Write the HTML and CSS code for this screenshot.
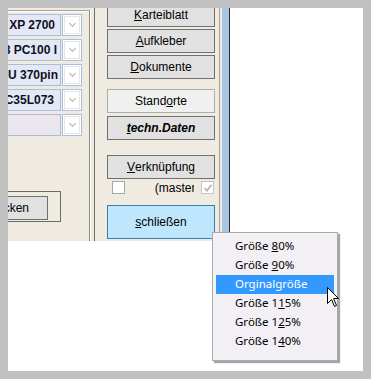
FILE: index.html
```html
<!DOCTYPE html>
<html lang="de">
<head>
    <meta charset="UTF-8">
    <title>Größe</title>
    <link rel="stylesheet" href="styles.css">
</head>
<body>
    <div class="screen">
        <div class="window">
            <div class="client">
                <div class="group">
                    <div class="field-row">
                        <div class="field"><span class="val v1">XP 2700</span></div>
                        <div class="drop"><span class="arrow"></span></div>
                    </div>
                    <div class="field-row">
                        <div class="field"><span class="val v2">SDRAM 128 PC100 I</span></div>
                        <div class="drop"><span class="arrow"></span></div>
                    </div>
                    <div class="field-row">
                        <div class="field"><span class="val v3">CPU 370pin</span></div>
                        <div class="drop"><span class="arrow"></span></div>
                    </div>
                    <div class="field-row">
                        <div class="field"><span class="val v4">IC35L073</span></div>
                        <div class="drop"><span class="arrow"></span></div>
                    </div>
                    <div class="field-row">
                        <div class="field empty"></div>
                        <div class="drop"><span class="arrow"></span></div>
                    </div>
                    <div class="print-box">
                        <div class="btn print-btn">Drucken</div>
                    </div>
                </div>

                <div class="panel">
                    <div class="btn first"><u>K</u>arteiblatt</div>
                    <div class="btn"><u>A</u>ufkleber</div>
                    <div class="btn"><u>D</u>okumente</div>
                    <div class="btn flat gap-lg">Stand<u>o</u>rte</div>
                    <div class="btn bold"><u>t</u>echn.Daten</div>
                    <div class="btn gap-xl"><u>V</u>erknüpfung</div>
                    <div class="check-row">
                        <span class="check"></span>
                        <span class="master">(master)</span>
                        <span class="check checked">
                            <svg width="10" height="10" viewBox="0 0 10 10"><path d="M1.5 5.2 L4 7.6 L8.6 1.8" fill="none" stroke="#b4b4b4" stroke-width="1.8"/></svg>
                        </span>
                    </div>
                    <div class="btn close"><u>s</u>chließen</div>
                </div>
            </div>
        </div>

        <div class="menu">
            <div class="item">Größe <u>8</u>0%</div>
            <div class="item">Größe <u>9</u>0%</div>
            <div class="item active">Orginal<u>g</u>röße</div>
            <div class="item">Größe 1<u>1</u>5%</div>
            <div class="item">Größe 1<u>2</u>5%</div>
            <div class="item">Größe 1<u>4</u>0%</div>
        </div>

        <svg class="cursor" width="13" height="21" viewBox="0 0 13 21">
            <path d="M0.5 0.5 L0.5 16.5 L4.5 12.5 L7.5 19.5 L9.5 18.5 L6.6 11.5 L11.5 11.5 Z" fill="#fff" stroke="#000" stroke-width="1"/>
        </svg>
    </div>
</body>
</html>
```

FILE: styles.css
```css
* {
    margin: 0;
    padding: 0;
    box-sizing: border-box;
}
body {
    background: #c0c0c0;
    padding: 8px;
    font-family: 'Liberation Sans', Arial, sans-serif;
}
.screen {
    position: relative;
    width: 355px;
    height: 363px;
    background: #fff;
    overflow: hidden;
}
.window {
    width: 222px;
    height: 233px;
    background: #a7c5e2;
    border-right: 1px solid #2e2e2e;
    padding-right: 7px;
}
.client {
    height: 100%;
    background: #efebe1;
    display: flex;
}
.group {
    width: 82px;
    margin-top: 2px;
    border-top: 1px solid #a0a0a0;
    border-right: 1px solid #8c8c8c;
    box-shadow: inset 0 1px 0 #fff, 1px 0 0 #fff;
    padding-top: 3px;
    margin-right: 4px;
}
.field-row {
    display: flex;
    gap: 1px;
    height: 22px;
    margin-bottom: 3px;
}
.field {
    width: 53px;
    height: 22px;
    background: #e3e8f4;
    border: 1px solid #a8bedb;
    border-left: none;
    display: flex;
    justify-content: flex-end;
    align-items: center;
    overflow: hidden;
    white-space: nowrap;
    font-size: 12px;
    font-weight: bold;
    color: #10101e;
}
.field.empty {
    background: #ebe6ed;
}
.v1 { margin-right: 5px; }
.v2 { margin-right: 3px; }
.v3 { margin-right: 2px; }
.v4 { margin-right: 6px; }
.drop {
    width: 20px;
    height: 22px;
    background: #fff;
    border: 1px solid #a8bedb;
    box-shadow: inset 0 0 0 1px #fff, inset 0 0 0 2px #e6e6e6;
    display: flex;
    align-items: center;
    justify-content: center;
}
.arrow {
    width: 5px;
    height: 5px;
    border-right: 1px solid #b0b0b0;
    border-bottom: 1px solid #b0b0b0;
    transform: rotate(45deg);
    margin-top: -3px;
}
.print-box {
    width: 53px;
    height: 31px;
    margin-top: 55px;
    border: 1px solid #6b6b6b;
    border-left: none;
    padding: 2px 12px 3px 0;
}
.print-box .btn {
    height: 24px;
    border-left: none;
    display: flex;
    justify-content: flex-end;
    padding-right: 18px;
    overflow: hidden;
}
.panel {
    width: 126px;
    height: 100%;
    border-left: 1px solid #6f6f6f;
    border-right: 1px solid #a0a0a0;
    padding: 0 4px 0 12px;
}
.btn {
    height: 24px;
    margin-top: 2px;
    background: #e1e1e1;
    border: 1px solid #707070;
    font-size: 12px;
    color: #000;
    display: flex;
    align-items: center;
    justify-content: center;
    white-space: nowrap;
}
.btn.first {
    margin-top: -5px;
}
.btn.flat {
    background: #f0f0f0;
    border-color: #adadad;
}
.btn.bold {
    font-weight: bold;
    font-style: italic;
    margin-top: 3px;
}
.gap-lg {
    margin-top: 10px;
}
.gap-xl {
    margin-top: 15px;
}
.check-row {
    display: flex;
    align-items: center;
    height: 13px;
    margin-top: 2px;
    padding: 0 1px 0 5px;
}
.check {
    width: 13px;
    height: 13px;
    background: #fff;
    border: 1px solid #a8a8a8;
    display: flex;
    align-items: center;
    justify-content: center;
}
.check.checked {
    border-color: #c4c4c4;
}
.master {
    width: 40px;
    margin-left: 30px;
    margin-right: 7px;
    overflow: hidden;
    white-space: nowrap;
    font-size: 12px;
}
.btn.close {
    height: 34px;
    margin-top: 11px;
    background: #bee6fd;
    border-color: #3c7fb1;
}
.menu {
    position: absolute;
    left: 204px;
    top: 224px;
    width: 126px;
    height: 129px;
    background: #f3f0f5;
    border: 1px solid #a9a9a9;
    box-shadow: 2px 2px 1px rgba(0, 0, 0, 0.35);
    padding: 4px 3px;
    font-family: 'Noto Sans', 'Open Sans', sans-serif;
    font-size: 11.5px;
    color: #000;
}
.item {
    height: 19px;
    line-height: 18px;
    padding-left: 19px;
}
.item.active {
    background: #3399ff;
    color: #fff;
}
.cursor {
    position: absolute;
    left: 319px;
    top: 279px;
}
```
